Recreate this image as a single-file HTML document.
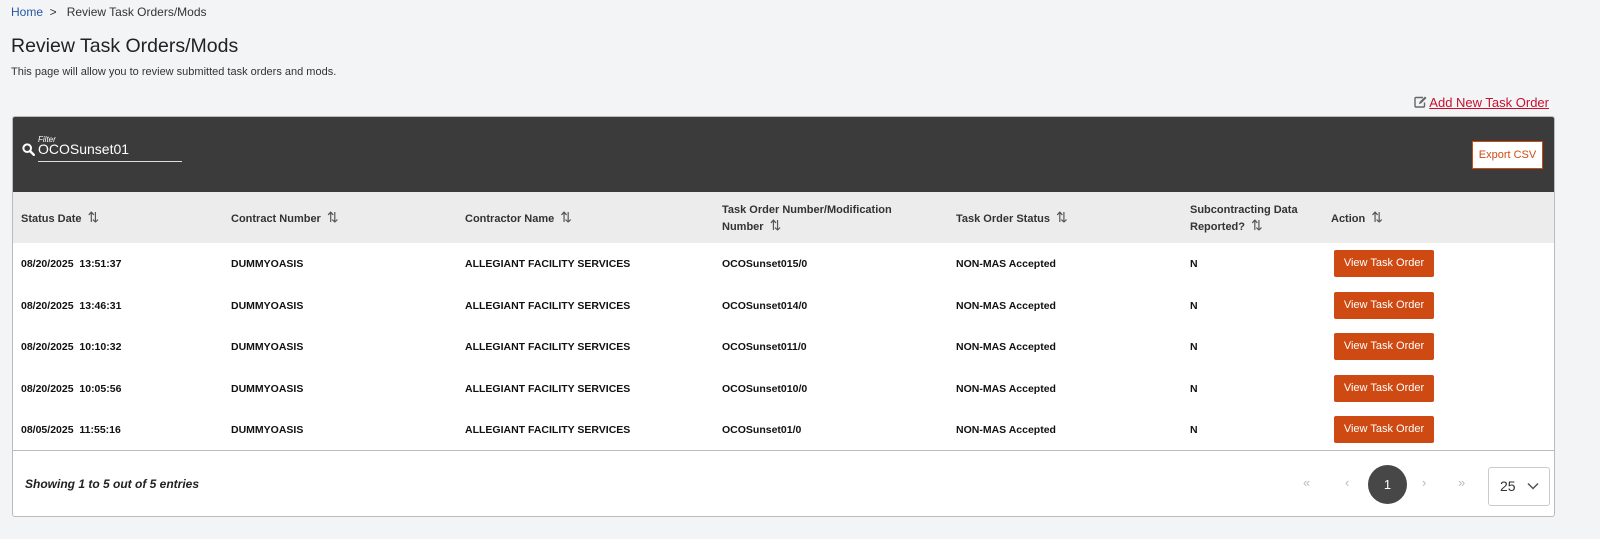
<!DOCTYPE html>
<html><head><meta charset="utf-8"><style>
*{box-sizing:border-box;margin:0;padding:0}
body{width:1600px;height:539px;background:#f3f4f6;font-family:"Liberation Sans",sans-serif;color:#222;position:relative;overflow:hidden}
.a{position:absolute;white-space:nowrap}
.crumb{left:11px;top:5px;font-size:12px;color:#333}
.crumb span{color:#2457a6}
h1{position:absolute;left:11px;top:35px;font-size:19.5px;font-weight:normal;color:#222}
.sub{left:11px;top:66px;font-size:11px;color:#333}
.add{right:51px;top:95px;font-size:13px;color:#c8102e;text-decoration:underline}
.box{position:absolute;left:12px;top:116px;width:1543px;height:401px;background:#fff;border:1px solid #bbb;border-radius:3px;overflow:hidden}
.dark{position:absolute;left:0;top:0;right:0;height:75px;background:#3b3b3b}
.hdr{position:absolute;left:0;top:75px;right:0;height:51px;background:#ececec}
.th{position:absolute;font-size:11px;font-weight:bold;color:#333;line-height:15px}
.td{position:absolute;font-size:10.5px;font-weight:bold;color:#111}
.btn{position:absolute;left:1321px;width:100px;height:27px;background:#cf4a12;color:#fff;font-size:11px;text-align:center;line-height:27px;border-radius:2px}
.ar{font-weight:normal;font-size:14px;margin-left:6px;color:#555}
</style></head><body>
<div class="a crumb"><span>Home</span> &nbsp;&gt;&nbsp;&nbsp; Review Task Orders/Mods</div>
<h1>Review Task Orders/Mods</h1>
<div class="a sub">This page will allow you to review submitted task orders and mods.</div>
<div class="a add"><svg width="13" height="12" viewBox="0 0 13 12" style="vertical-align:-1px;margin-right:2px"><path d="M9 1.5H2a1 1 0 0 0-1 1V10a1 1 0 0 0 1 1h7.5a1 1 0 0 0 1-1V6.5" fill="none" stroke="#666" stroke-width="1.4"/><path d="M5 8l.5-2L11 .5l1.5 1.5L7 7.5z" fill="#666"/></svg>Add New Task Order</div>
<div class="box">
<div class="dark">
<div class="a" style="left:25px;top:18px;font-size:8px;font-style:italic;color:#fff">Filter</div>
<svg class="a" style="left:9px;top:26px" width="13" height="13" viewBox="0 0 13 13"><circle cx="5.2" cy="5.2" r="3.8" fill="none" stroke="#fff" stroke-width="2"/><path d="M8 8l3.8 3.8" stroke="#fff" stroke-width="2.4" stroke-linecap="round"/></svg>
<div class="a" style="left:25px;top:24px;font-size:14px;color:#fff">OCOSunset01</div>
<div class="a" style="left:25px;top:44px;width:144px;height:1px;background:#ddd"></div>
<div class="a" style="left:1459px;top:24px;width:71px;height:28px;background:#fff;border:1px solid #cf4a12;color:#cf4a12;font-size:11px;text-align:center;line-height:26px">Export CSV</div>
</div>
<div class="hdr">
<div class="th" style="left:8px;top:18px">Status Date<span class="ar">⇅</span></div>
<div class="th" style="left:218px;top:18px">Contract Number<span class="ar">⇅</span></div>
<div class="th" style="left:452px;top:18px">Contractor Name<span class="ar">⇅</span></div>
<div class="th" style="left:709px;top:11px">Task Order Number/Modification<br>Number<span class="ar">⇅</span></div>
<div class="th" style="left:943px;top:18px">Task Order Status<span class="ar">⇅</span></div>
<div class="th" style="left:1177px;top:11px">Subcontracting Data<br>Reported?<span class="ar">⇅</span></div>
<div class="th" style="left:1318px;top:18px">Action<span class="ar">⇅</span></div>
</div>
<div id="rows"></div>
<div class="a" style="left:0;right:0;top:333px;height:1px;background:#bbb"></div>
<div class="a" style="left:12px;top:360px;font-size:12px;font-style:italic;font-weight:bold;color:#222">Showing 1 to 5 out of 5 entries</div>
<div class="a" style="left:1290px;top:358px;font-size:13px;color:#bbb">«</div>
<div class="a" style="left:1332px;top:358px;font-size:13px;color:#bbb">‹</div>
<div class="a" style="left:1355px;top:348px;width:39px;height:39px;border-radius:50%;background:#474747;color:#fff;font-size:13px;text-align:center;line-height:39px">1</div>
<div class="a" style="left:1409px;top:358px;font-size:13px;color:#bbb">›</div>
<div class="a" style="left:1445px;top:358px;font-size:13px;color:#bbb">»</div>
<div class="a" style="left:1475px;top:350px;width:62px;height:39px;border:1px solid #ccc;border-radius:3px;font-size:14px;line-height:37px;padding-left:11px;color:#333">25<svg width="12" height="8" viewBox="0 0 12 8" style="margin-left:11px;vertical-align:1px"><path d="M1 1.5l5 5 5-5" fill="none" stroke="#555" stroke-width="1.5"/></svg></div>
</div>
<script>
var d=[["08/20/2025&nbsp;&nbsp;13:51:37","OCOSunset015/0"],["08/20/2025&nbsp;&nbsp;13:46:31","OCOSunset014/0"],["08/20/2025&nbsp;&nbsp;10:10:32","OCOSunset011/0"],["08/20/2025&nbsp;&nbsp;10:05:56","OCOSunset010/0"],["08/05/2025&nbsp;&nbsp;11:55:16","OCOSunset01/0"]];
var h="";d.forEach(function(r,i){var y=126+i*41.6;var t=y+15;
h+='<div class="td" style="left:8px;top:'+t+'px">'+r[0]+'</div><div class="td" style="left:218px;top:'+t+'px">DUMMYOASIS</div><div class="td" style="left:452px;top:'+t+'px">ALLEGIANT FACILITY SERVICES</div><div class="td" style="left:709px;top:'+t+'px">'+r[1]+'</div><div class="td" style="left:943px;top:'+t+'px">NON-MAS Accepted</div><div class="td" style="left:1177px;top:'+t+'px">N</div><div class="btn" style="top:'+(y+7)+'px">View Task Order</div>';});
document.getElementById("rows").innerHTML=h;
</script>
</body></html>
